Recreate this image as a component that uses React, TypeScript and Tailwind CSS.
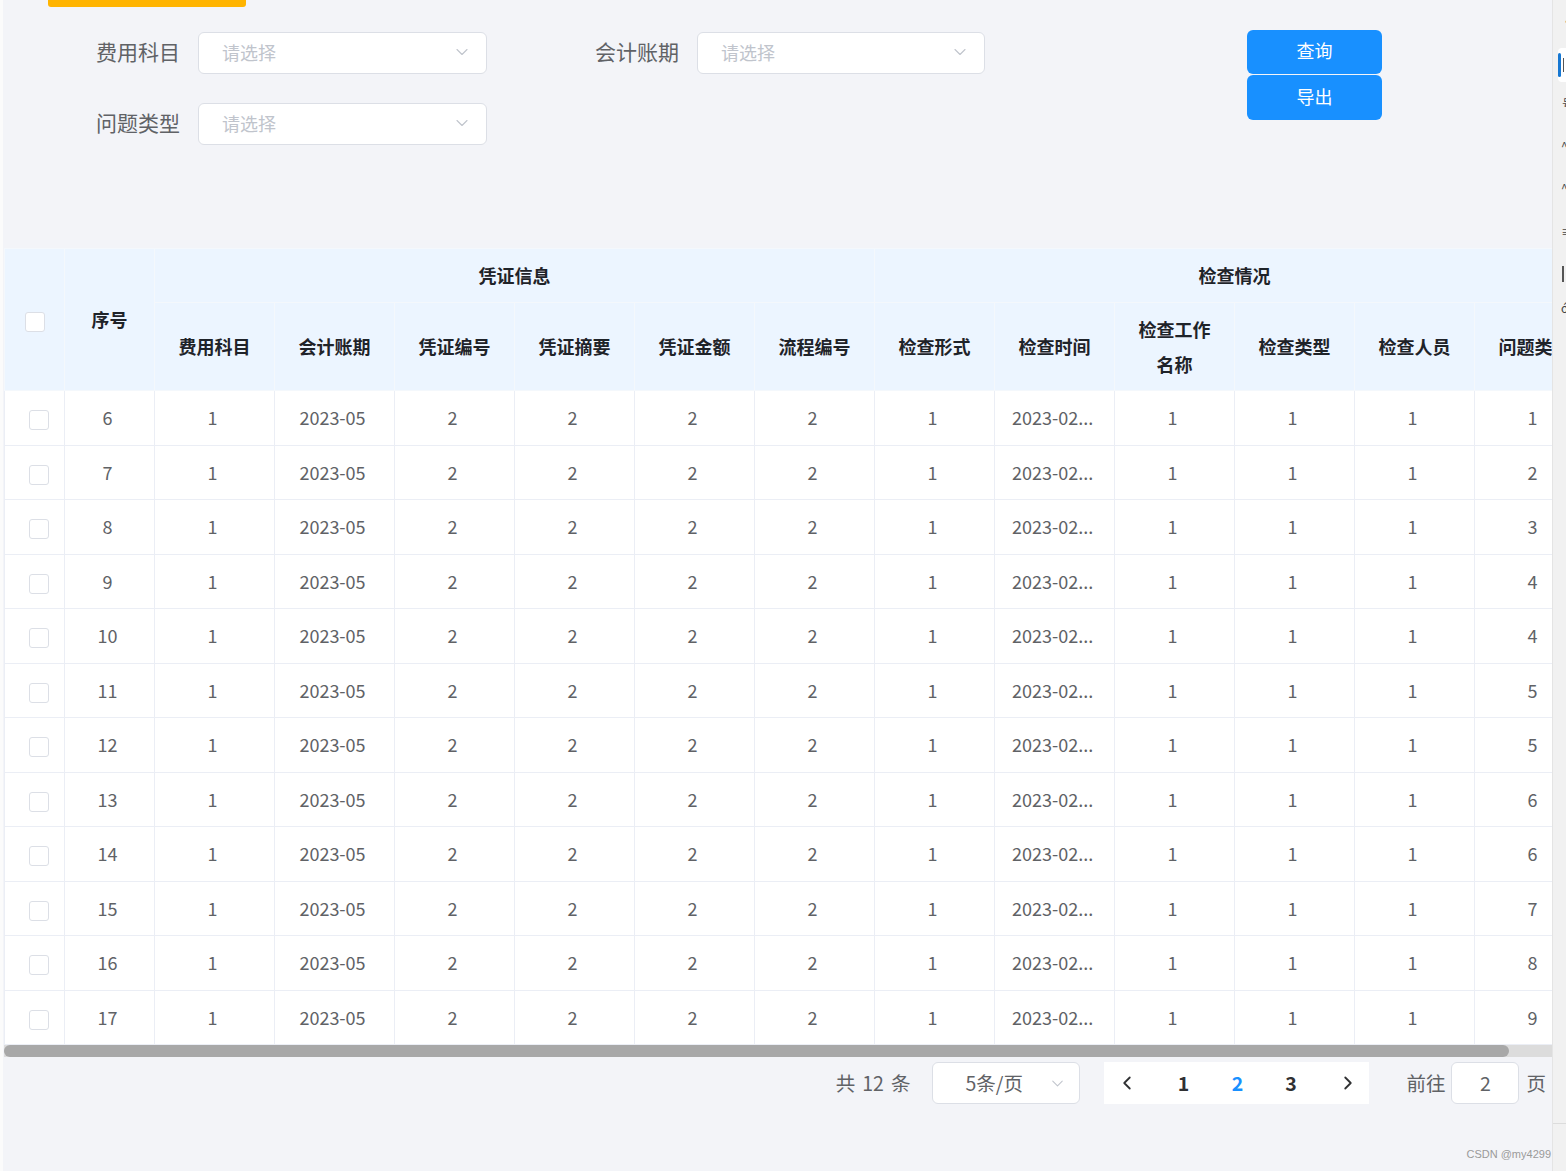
import { ChevronDown, ChevronLeft, ChevronRight } from "lucide-react";

const groupA = ["费用科目", "会计账期", "凭证编号", "凭证摘要", "凭证金额", "流程编号"];
const groupB = ["检查形式", "检查时间", "检查工作名称", "检查类型", "检查人员", "问题类型"];
const lastCol = [1, 2, 3, 4, 4, 5, 5, 6, 6, 7, 8, 9];

function Checkbox({ className = "" }: { className?: string }) {
  return <span className={"inline-block w-[20px] h-[20px] rounded-[3px] border border-[#dcdfe6] bg-white align-middle " + className} />;
}

function Select({ className = "" }: { className?: string }) {
  return (
    <div className={"h-[42px] flex items-center justify-between pl-[23px] pr-[14px] pb-[2px] bg-white border border-[#dcdfe6] rounded-[6px] " + className}>
      <span className="text-[18px] text-[#c0c4cc]">请选择</span>
      <ChevronDown size={20} strokeWidth={1.3} className="text-[#c0c4cc]" />
    </div>
  );
}

function Filters() {
  return (
    <div className="flex mt-[23px]">
      <div className="pl-[93px]">
        <div className="flex items-center mt-[2px] h-[42px]">
          <label className="w-[84px] pb-[2px] text-[21px] text-[#606266] whitespace-nowrap">费用科目</label>
          <Select className="ml-[18px] w-[289px]" />
          <label className="ml-[108px] w-[84px] pb-[2px] text-[21px] text-[#606266] whitespace-nowrap">会计账期</label>
          <Select className="ml-[18px] w-[288px]" />
        </div>
        <div className="flex items-center mt-[29px] h-[42px]">
          <label className="w-[84px] pb-[2px] text-[21px] text-[#606266] whitespace-nowrap">问题类型</label>
          <Select className="ml-[18px] w-[289px]" />
        </div>
      </div>
      <div className="ml-[262px] flex flex-col gap-[1px]">
        <button className="w-[135px] h-[44px] pb-[3px] rounded-[6px] bg-[#1890ff] text-white text-[18px]">查询</button>
        <button className="w-[135px] h-[45px] pb-[3px] rounded-[6px] bg-[#1890ff] text-white text-[18px]">导出</button>
      </div>
    </div>
  );
}

function DataTable() {
  const th = "border border-[#f4f8fc] bg-[#ecf5ff] text-[18px] font-bold text-[#1f2329] text-center";
  const td = "border border-[#ebeef5] text-[18px] text-[#606266] text-center whitespace-nowrap pr-[4px]";
  return (
    <div className="mt-[103px] ml-[1px] w-[1548px] overflow-hidden bg-white">
      <table className="table-fixed border-collapse w-[1590px]">
        <colgroup>
          <col className="w-[60px]" />
          <col className="w-[90px]" />
          {groupA.concat(groupB).map((c) => (
            <col key={c} className="w-[120px]" />
          ))}
        </colgroup>
        <thead>
          <tr className="h-[54px]">
            <th rowSpan={2} className={th}>
              <Checkbox />
            </th>
            <th rowSpan={2} className={th}>序号</th>
            <th colSpan={6} className={th}>凭证信息</th>
            <th colSpan={6} className={th}>检查情况</th>
          </tr>
          <tr className="h-[88px]">
            {groupA.concat(groupB).map((c) => (
              <th key={c} className={th + " leading-[35px] px-[22px] whitespace-nowrap"}>
                {c === "检查工作名称" ? (
                  <>
                    检查工作
                    <br />
                    名称
                  </>
                ) : (
                  c
                )}
              </th>
            ))}
          </tr>
        </thead>
        <tbody>
          {lastCol.map((v, i) => (
            <tr key={i} className="h-[54.5px]">
              <td className={td + " pl-[12px]"}>
                <Checkbox />
              </td>
              <td className={td}>{i + 6}</td>
              <td className={td}>1</td>
              <td className={td}>2023-05</td>
              <td className={td}>2</td>
              <td className={td}>2</td>
              <td className={td}>2</td>
              <td className={td}>2</td>
              <td className={td}>1</td>
              <td className={td}>2023-02...</td>
              <td className={td}>1</td>
              <td className={td}>1</td>
              <td className={td}>1</td>
              <td className={td}>{v}</td>
            </tr>
          ))}
        </tbody>
      </table>
      <div className="h-[12px] bg-[#dcdcdc]">
        <div className="h-[12px] w-[1505px] rounded-full bg-[#a8a8a8]" />
      </div>
    </div>
  );
}

function Pagination() {
  return (
    <div className="flex items-center justify-end mt-[5px] pr-[6px] text-[19.5px] text-[#606266]">
      <span className="whitespace-nowrap">
        共<span className="mx-[7px]">12</span>条
      </span>
      <div className="ml-[22px] w-[148px] h-[42px] flex items-center justify-between pl-[32px] pr-[12px] bg-white border border-[#dcdfe6] rounded-[6px]">
        <span>5条/页</span>
        <ChevronDown size={19} strokeWidth={1.3} className="text-[#c0c4cc]" />
      </div>
      <div className="ml-[24px] h-[42px] flex items-center bg-white">
        <div className="w-[52px] h-full flex items-center justify-center pr-[6px]">
          <ChevronLeft size={22} strokeWidth={2} className="text-[#303133]" />
        </div>
        <div className="w-[54px] text-center font-bold text-[#303133]">1</div>
        <div className="w-[54px] text-center font-bold text-[#1890ff]">2</div>
        <div className="w-[53px] text-center font-bold text-[#303133]">3</div>
        <div className="w-[52px] h-full flex items-center justify-center pl-[10px]">
          <ChevronRight size={22} strokeWidth={2} className="text-[#303133]" />
        </div>
      </div>
      <span className="ml-[37px]">前往</span>
      <div className="ml-[6px] w-[68px] h-[42px] flex items-center justify-center bg-white border border-[#dcdfe6] rounded-[6px]">2</div>
      <span className="ml-[7px]">页</span>
    </div>
  );
}

function SideStrip() {
  return (
    <div className="w-[14px] h-full border-l border-[#e4e4e4] bg-[#f1f1f1] overflow-hidden flex flex-col text-[12px] text-[#444] leading-none">
      <span className="mt-[16px] ml-[8px]">•</span>
      <div className="mt-[20px] ml-[5px] h-[34px] bg-white rounded-l-[4px] flex items-center">
        <span className="w-[3px] h-[24px] bg-[#1677d2] rounded-full" />
        <span className="ml-[2px] w-[3px] h-[14px] border-l border-[#555]" />
      </div>
      <span className="mt-[16px] ml-[9px]">号</span>
      <span className="mt-[30px] ml-[8px]">^</span>
      <span className="mt-[30px] ml-[8px]">^</span>
      <span className="mt-[32px] ml-[8px]">≡</span>
      <span className="mt-[28px] ml-[9px] w-[4px] h-[16px] border-l-2 border-[#555]" />
      <span className="mt-[20px] ml-[8px]">ó</span>
      <div className="mt-auto mb-[47px] border-t border-[#dcdcdc]" />
    </div>
  );
}

export default function App() {
  return (
    <div className="w-[1566px] h-[1171px] flex overflow-hidden font-['Noto_Sans_CJK_SC','Noto_Sans',sans-serif] bg-[#f3f4f8]">
      <div className="w-[3px] h-full bg-[#fbfbfb]" />
      <main className="relative w-[1549px] h-full flex flex-col">
        <div className="ml-[45px] w-[198px] h-[7px] rounded-b-[3px] bg-[#ffb400]" />
        <Filters />
        <DataTable />
        <Pagination />
        <span className="absolute right-[1px] bottom-[9px] text-[11px] text-[#9a9a9a] font-['Liberation_Sans',sans-serif]">CSDN @my4299</span>
      </main>
      <SideStrip />
    </div>
  );
}
